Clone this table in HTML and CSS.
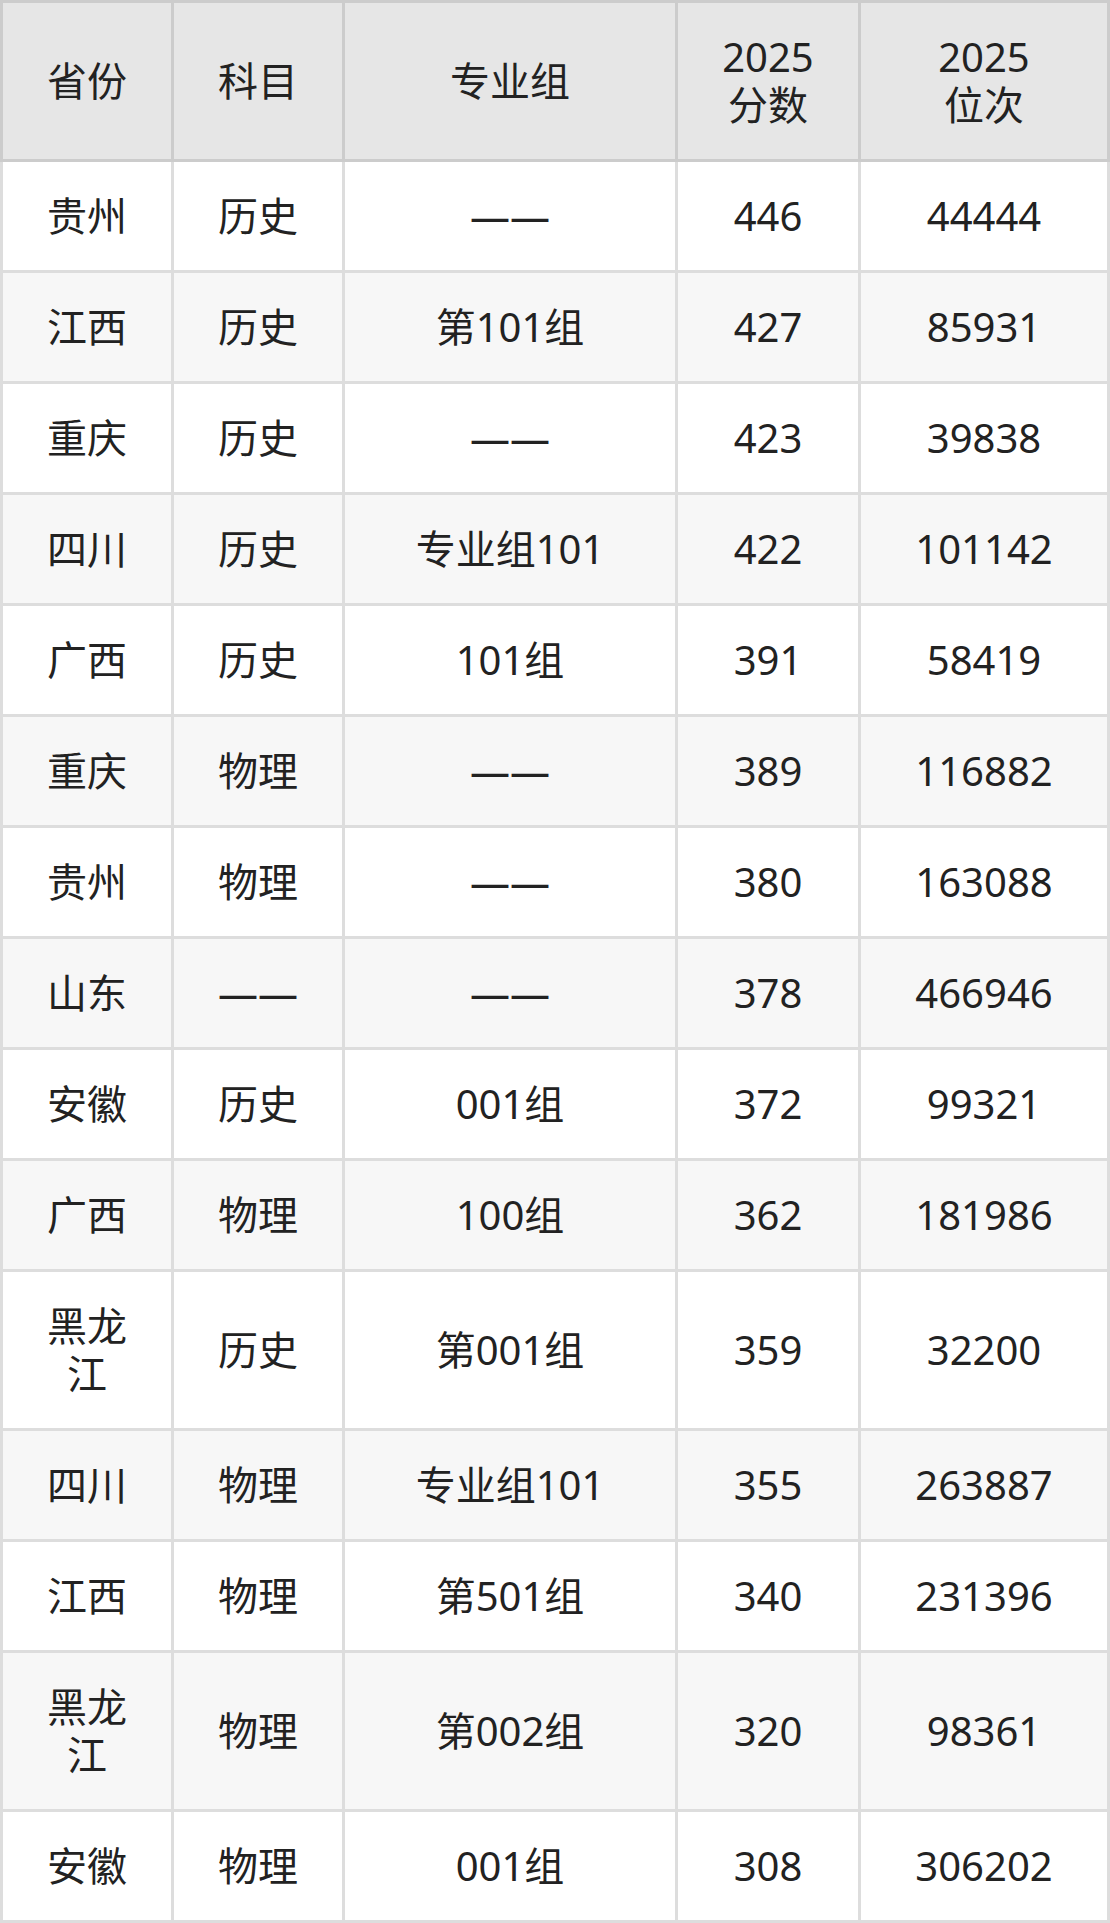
FILE: index.html
```html
<!DOCTYPE html>
<html lang="zh">
<head>
<meta charset="utf-8">
<title>2025 分数位次</title>
<link rel="stylesheet" href="styles.css">
</head>
<body>
<table class="score-table">
  <thead>
    <tr>
      <th class="c-prov">省份</th>
      <th class="c-subj">科目</th>
      <th class="c-group">专业组</th>
      <th class="c-score">2025<br>分数</th>
      <th class="c-rank">2025<br>位次</th>
    </tr>
  </thead>
  <tbody>
    <tr><td>贵州</td><td>历史</td><td>——</td><td>446</td><td>44444</td></tr>
    <tr><td>江西</td><td>历史</td><td>第101组</td><td>427</td><td>85931</td></tr>
    <tr><td>重庆</td><td>历史</td><td>——</td><td>423</td><td>39838</td></tr>
    <tr><td>四川</td><td>历史</td><td>专业组101</td><td>422</td><td>101142</td></tr>
    <tr><td>广西</td><td>历史</td><td>101组</td><td>391</td><td>58419</td></tr>
    <tr><td>重庆</td><td>物理</td><td>——</td><td>389</td><td>116882</td></tr>
    <tr><td>贵州</td><td>物理</td><td>——</td><td>380</td><td>163088</td></tr>
    <tr><td>山东</td><td>——</td><td>——</td><td>378</td><td>466946</td></tr>
    <tr><td>安徽</td><td>历史</td><td>001组</td><td>372</td><td>99321</td></tr>
    <tr><td>广西</td><td>物理</td><td>100组</td><td>362</td><td>181986</td></tr>
    <tr><td>黑龙江</td><td>历史</td><td>第001组</td><td>359</td><td>32200</td></tr>
    <tr><td>四川</td><td>物理</td><td>专业组101</td><td>355</td><td>263887</td></tr>
    <tr><td>江西</td><td>物理</td><td>第501组</td><td>340</td><td>231396</td></tr>
    <tr><td>黑龙江</td><td>物理</td><td>第002组</td><td>320</td><td>98361</td></tr>
    <tr><td>安徽</td><td>物理</td><td>001组</td><td>308</td><td>306202</td></tr>
  </tbody>
</table>
</body>
</html>
```
FILE: styles.css
```css
html, body {
  margin: 0;
  padding: 0;
  background: #ffffff;
}

.score-table {
  width: 1110px;
  table-layout: fixed;
  border-collapse: separate;
  border-spacing: 0;
  font-family: "Noto Sans", "Noto Sans CJK SC", sans-serif;
  font-size: 40px;
  line-height: 48px;
  color: #222222;
}

.score-table th,
.score-table td {
  box-sizing: border-box;
  padding: 30px;
  text-align: center;
  vertical-align: middle;
  font-weight: normal;
  border-right: 3px solid #dddddd;
  border-bottom: 3px solid #dddddd;
}

.score-table th:first-child,
.score-table td:first-child {
  border-left: 3px solid #dddddd;
}

.score-table th {
  background: #e6e6e6;
  border-top: 3px solid #cccccc;
  border-right-color: #cccccc;
  border-bottom-color: #cccccc;
}

.score-table th:first-child {
  border-left-color: #cccccc;
}

.c-prov { width: 174px; }
.c-subj { width: 171px; }
.c-group { width: 333px; }
.c-score { width: 183px; }
.c-rank { width: 249px; }

.score-table tbody tr:nth-child(odd) td {
  background: #ffffff;
}

.score-table tbody tr:nth-child(even) td {
  background: #f7f7f7;
}
```
